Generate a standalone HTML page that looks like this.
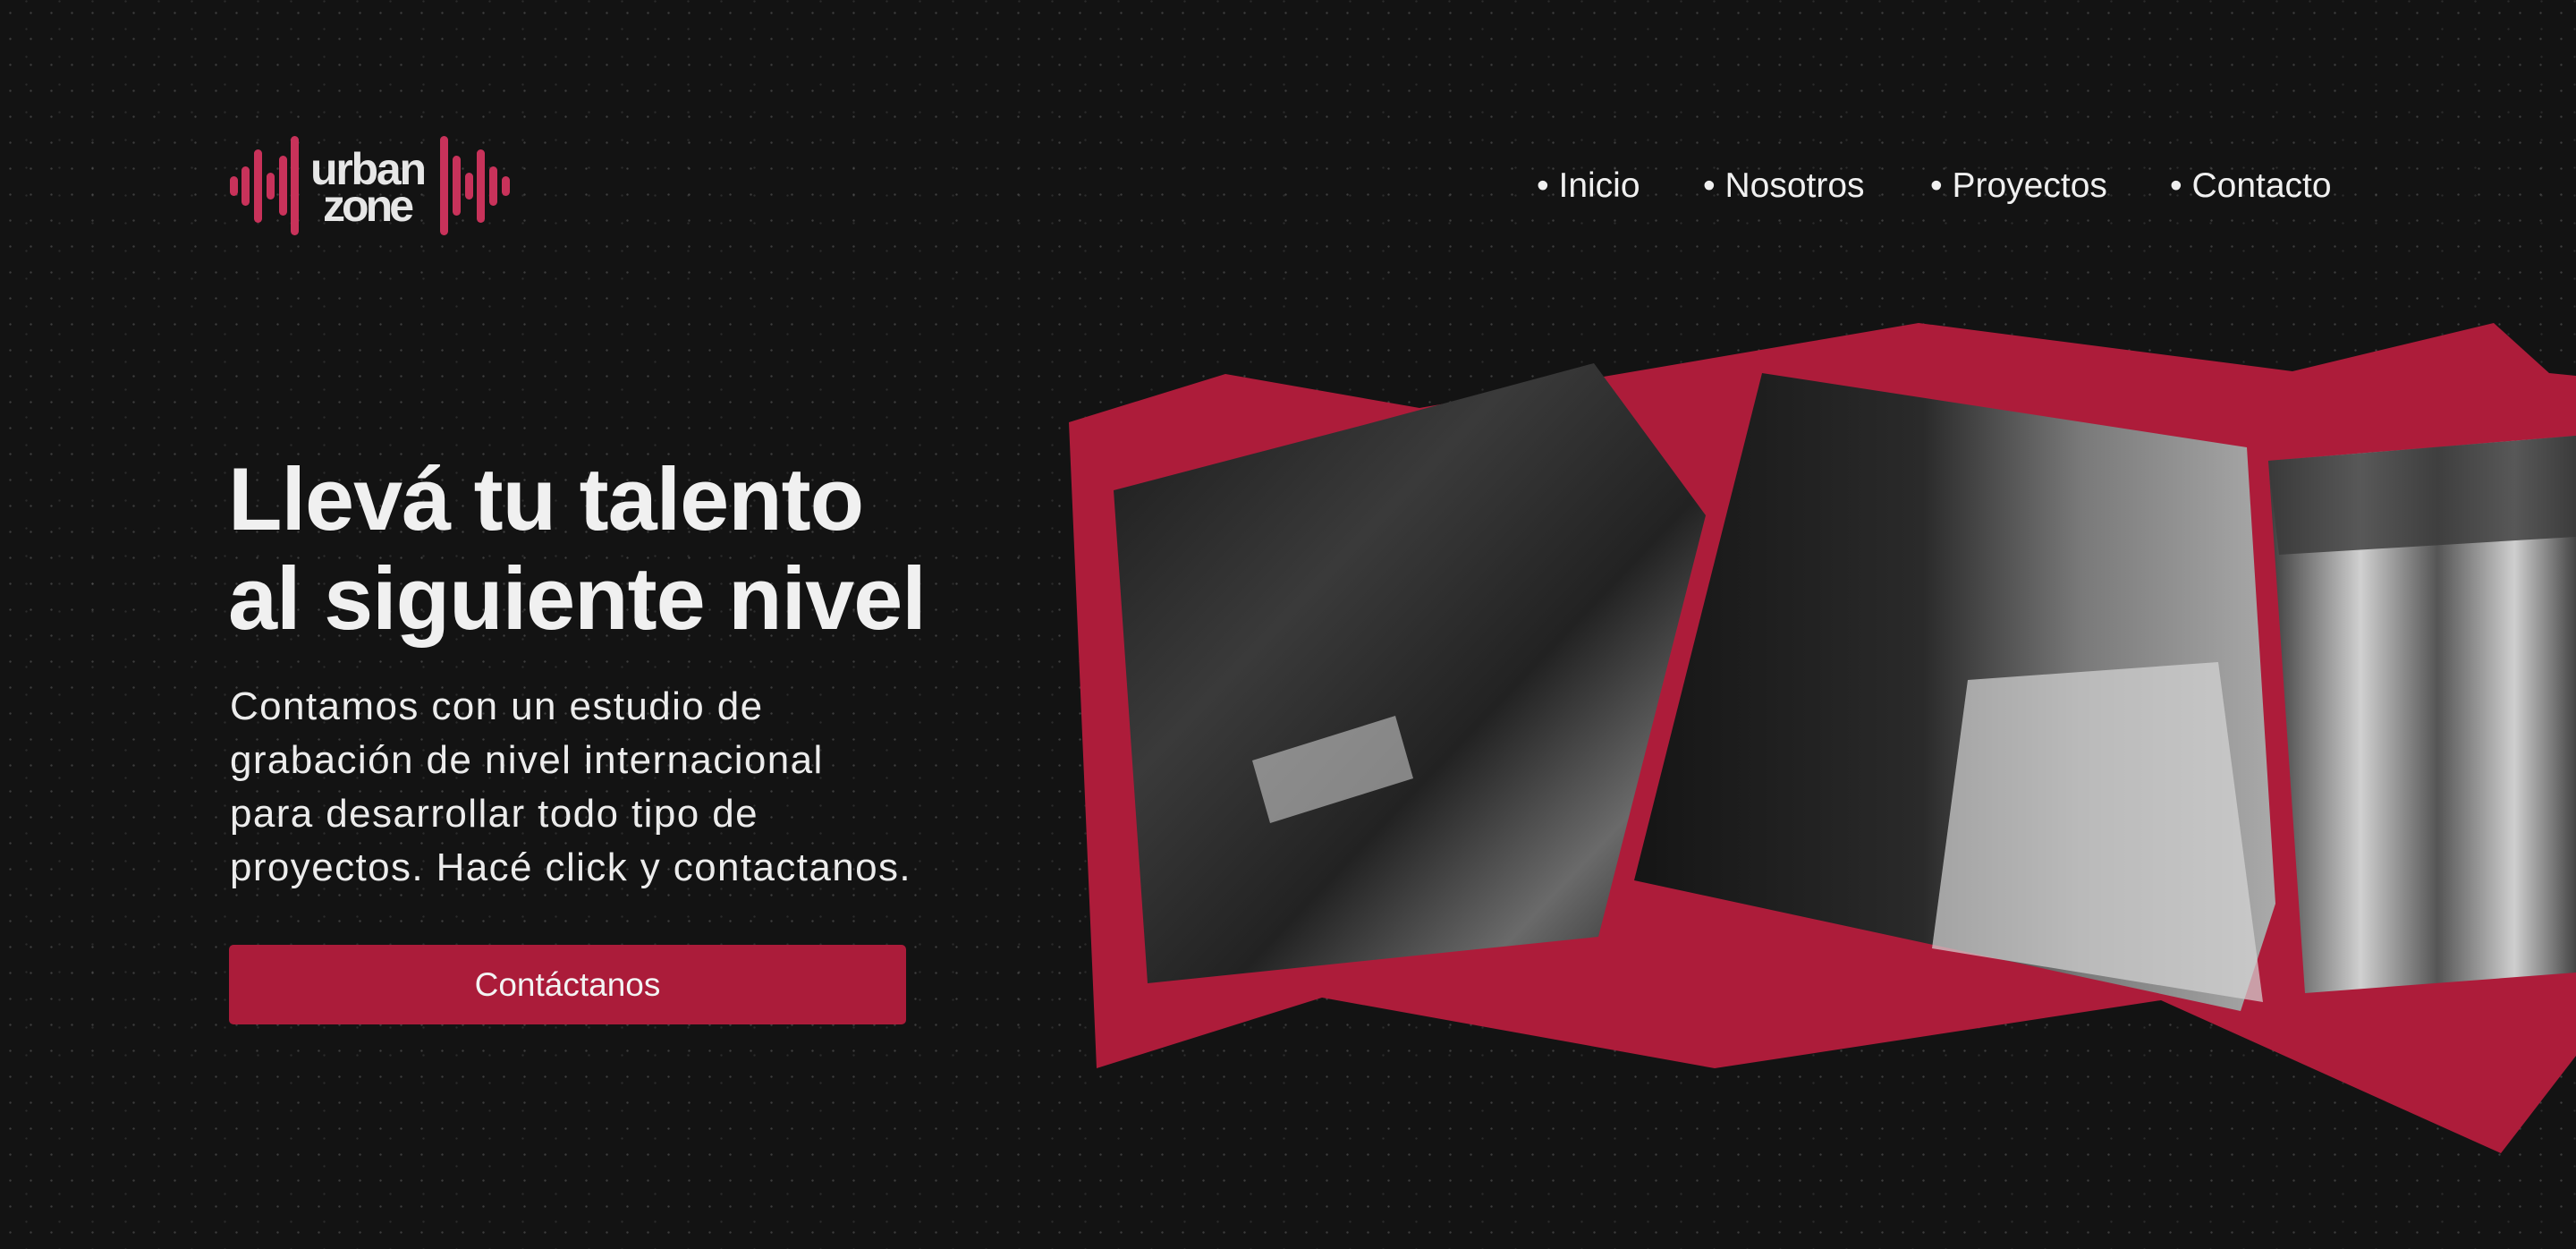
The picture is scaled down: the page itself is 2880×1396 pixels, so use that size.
<!DOCTYPE html>
<html><head><meta charset="utf-8"><style>
html,body{margin:0;padding:0;}
body{width:2880px;height:1396px;overflow:hidden;background:#131313;position:relative;font-family:"Liberation Sans",sans-serif;
background-image:radial-gradient(circle,rgba(255,255,255,0.18) 1px,transparent 1.4px),radial-gradient(circle,rgba(255,255,255,0.10) 1px,transparent 1.4px);
background-size:23px 29px,37px 31px;background-position:0 0,11px 17px;}
.abs{position:absolute;left:0;top:0;width:2880px;height:1396px;}
.nav{position:absolute;top:186px;font-size:39px;color:#f0f0f0;}
.nav span{position:absolute;white-space:nowrap;}
h1{position:absolute;left:255px;top:502px;margin:0;font-size:99px;line-height:111px;color:#f0f0f0;font-weight:bold;letter-spacing:-1px;}
p{position:absolute;left:257px;top:760px;margin:0;font-size:44px;line-height:60px;color:#ececec;letter-spacing:1.4px;}
.btn{position:absolute;left:256px;top:1056px;width:757px;height:89px;background:#ab1c3a;border-radius:5px;color:#f3f3f3;font-size:37px;text-align:center;line-height:89px;}
</style></head><body>
<svg class="abs" viewBox="0 0 2880 1396" width="2880" height="1396">
<defs>
<linearGradient id="g1" x1="0" y1="0" x2="1" y2="1"><stop offset="0" stop-color="#1a1a1a"/><stop offset="0.35" stop-color="#3a3a3a"/><stop offset="0.6" stop-color="#222"/><stop offset="0.8" stop-color="#6a6a6a"/><stop offset="1" stop-color="#1c1c1c"/></linearGradient>
<linearGradient id="g2" x1="0" y1="0" x2="1" y2="0"><stop offset="0" stop-color="#151515"/><stop offset="0.45" stop-color="#2a2a2a"/><stop offset="0.7" stop-color="#7a7a7a"/><stop offset="1" stop-color="#aaa"/></linearGradient>
<linearGradient id="g3" x1="0" y1="0" x2="1" y2="0"><stop offset="0" stop-color="#3a3a3a"/><stop offset="0.3" stop-color="#d0d0d0"/><stop offset="0.55" stop-color="#555"/><stop offset="0.8" stop-color="#cfcfcf"/><stop offset="1" stop-color="#444"/></linearGradient>
</defs>
<polygon fill="#ad1c3a" points="1195,472 1370,418 1587,456 2145,361 2563,415 2788,361 2850,417 2880,420 2880,1180 2796,1289 2416,1118 1917,1194 1478,1115 1226,1194"/>
<polygon fill="url(#g1)" points="1245,548 1532,473 1782,406 1907,576 1787,1047 1283,1099"/>
<polygon fill="#e8e8e8" opacity="0.5" points="1400,850 1560,800 1580,870 1420,920"/>
<polygon fill="url(#g2)" points="1970,417 2512,500 2544,1010 2505,1130 1827,984"/>
<polygon fill="#d5d5d5" opacity="0.7" points="2200,760 2480,740 2530,1120 2160,1060"/>
<polygon fill="url(#g3)" points="2536,515 2880,487 2880,1087 2577,1110"/>
<polygon fill="#3a3a3a" opacity="0.8" points="2536,515 2880,487 2880,600 2548,620"/>
<g fill="#c8325a">
<rect x="257" y="197" width="9" height="22" rx="4.5"/><rect x="270" y="186" width="9" height="44" rx="4.5"/><rect x="284" y="167" width="9" height="82" rx="4.5"/><rect x="298" y="193" width="9" height="30" rx="4.5"/><rect x="312" y="174" width="9" height="67" rx="4.5"/><rect x="325" y="152" width="9" height="111" rx="4.5"/>
<rect x="492" y="152" width="9" height="111" rx="4.5"/><rect x="506" y="174" width="9" height="67" rx="4.5"/><rect x="520" y="193" width="9" height="30" rx="4.5"/><rect x="533" y="167" width="9" height="82" rx="4.5"/><rect x="547" y="186" width="9" height="44" rx="4.5"/><rect x="561" y="197" width="9" height="22" rx="4.5"/>
</g>
<text x="347" y="206" font-family="Liberation Sans" font-weight="bold" font-size="50" fill="#e6e6e6" textLength="130">urban</text>
<text x="361" y="247" font-family="Liberation Sans" font-weight="bold" font-size="50" fill="#e6e6e6" textLength="102">zone</text>
</svg>
<div class="nav">
<span style="left:1718px">• Inicio</span>
<span style="left:1904px">• Nosotros</span>
<span style="left:2158px">• Proyectos</span>
<span style="left:2426px">• Contacto</span>
</div>
<h1>Llevá tu talento<br>al siguiente nivel</h1>
<p>Contamos con un estudio de<br>grabación de nivel internacional<br>para desarrollar todo tipo de<br>proyectos. Hacé click y contactanos.</p>
<div class="btn">Contáctanos</div>
</body></html>
